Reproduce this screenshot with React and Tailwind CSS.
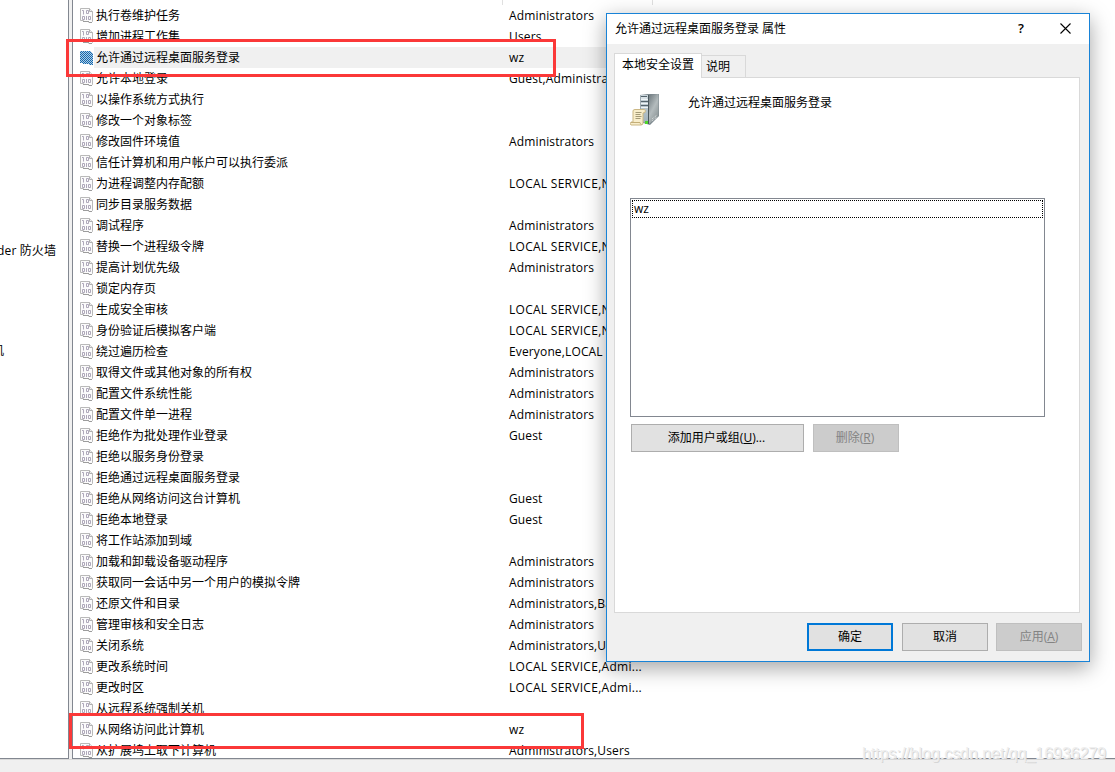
import React from 'react';

const policies = [
  { name: '执行卷维护任务', value: 'Administrators' },
  { name: '增加进程工作集', value: 'Users' },
  { name: '允许通过远程桌面服务登录', value: 'wz', selected: true },
  { name: '允许本地登录', value: 'Guest,Administrators' },
  { name: '以操作系统方式执行', value: '' },
  { name: '修改一个对象标签', value: '' },
  { name: '修改固件环境值', value: 'Administrators' },
  { name: '信任计算机和用户帐户可以执行委派', value: '' },
  { name: '为进程调整内存配额', value: 'LOCAL SERVICE,NETWO...' },
  { name: '同步目录服务数据', value: '' },
  { name: '调试程序', value: 'Administrators' },
  { name: '替换一个进程级令牌', value: 'LOCAL SERVICE,NETWO...' },
  { name: '提高计划优先级', value: 'Administrators' },
  { name: '锁定内存页', value: '' },
  { name: '生成安全审核', value: 'LOCAL SERVICE,NETWO...' },
  { name: '身份验证后模拟客户端', value: 'LOCAL SERVICE,NETWO...' },
  { name: '绕过遍历检查', value: 'Everyone,LOCAL SERVI...' },
  { name: '取得文件或其他对象的所有权', value: 'Administrators' },
  { name: '配置文件系统性能', value: 'Administrators' },
  { name: '配置文件单一进程', value: 'Administrators' },
  { name: '拒绝作为批处理作业登录', value: 'Guest' },
  { name: '拒绝以服务身份登录', value: '' },
  { name: '拒绝通过远程桌面服务登录', value: '' },
  { name: '拒绝从网络访问这台计算机', value: 'Guest' },
  { name: '拒绝本地登录', value: 'Guest' },
  { name: '将工作站添加到域', value: '' },
  { name: '加载和卸载设备驱动程序', value: 'Administrators' },
  { name: '获取同一会话中另一个用户的模拟令牌', value: 'Administrators' },
  { name: '还原文件和目录', value: 'Administrators,Backup...' },
  { name: '管理审核和安全日志', value: 'Administrators' },
  { name: '关闭系统', value: 'Administrators,Users' },
  { name: '更改系统时间', value: 'LOCAL SERVICE,Admi...' },
  { name: '更改时区', value: 'LOCAL SERVICE,Admi...' },
  { name: '从远程系统强制关机', value: '' },
  { name: '从网络访问此计算机', value: 'wz' },
  { name: '从扩展坞上取下计算机', value: 'Administrators,Users' },
];

const PolicyIcon = ({ selected }) => (
  <svg width="14" height="15" viewBox="0 0 14 15" className="shrink-0">
    <defs>
      <pattern id="dither" width="2" height="2" patternUnits="userSpaceOnUse">
        <rect width="2" height="2" fill="#b4cde2" />
        <rect width="1" height="1" fill="#1269b0" />
        <rect x="1" y="1" width="1" height="1" fill="#1269b0" />
      </pattern>
    </defs>
    {selected ? (
      <path d="M0 1h10l3 3v11h-3l-2-1H4l-2-1H0z" fill="url(#dither)" shapeRendering="crispEdges" />
    ) : (
      <>
        <path d="M.5 .5h9l3 3v10l-1 1h-2l-2-1h-3l-1-1h-3z" fill="#fbfbfb" stroke="#b9b9b9" />
        <path d="M9.500 .5v3h3" fill="#ececec" stroke="#b0b0b0" />
        <path d="M3 13.500h6M9 14.500h3" stroke="#9c9c9c" fill="none" />
        <path d="M2 2.500h1.500v4M6.500 2.500h2v3h-2zM2.500 8.500h2v3h-2zM6.500 8v4M8.500 8.500h2v3h-2z" stroke="#a69fb2" strokeWidth=".9" fill="none" />
      </>
    )}
  </svg>
);

const ServerIcon = () => (
  <svg width="32" height="34" viewBox="0 0 32 34">
    <defs>
      <linearGradient id="side" x1="0" y1="0" x2=".6" y2="1">
        <stop offset="0" stopColor="#6d787d" />
        <stop offset=".55" stopColor="#b3bbbd" />
        <stop offset="1" stopColor="#8c9597" />
      </linearGradient>
      <linearGradient id="front" x1="0" y1="0" x2="0" y2="1">
        <stop offset="0" stopColor="#c9d4da" />
        <stop offset="1" stopColor="#9fb0ba" />
      </linearGradient>
    </defs>
    <path d="M10 2l8-1h11v22l-9 9-10-3z" fill="#7c888e" />
    <path d="M10.500 2h8v29l-8-3z" fill="url(#front)" />
    <path d="M19 2l9.500-1v22l-9.500 8z" fill="url(#side)" />
    <path d="M11 3.500h6M11 8.500h7M11 12.500h7" stroke="#54636c" />
    <path d="M11 5h6M11 6.500h7M11 10.500h7M11 14.500h7" stroke="#eef4f7" />
    <path d="M18.500 2v29" stroke="#4a575d" />
    <path d="M22 26l5-4M22 28l5-4" stroke="#dfe3e4" strokeDasharray="1 1" />
    <rect x="15" y="28" width="3" height="3" fill="#4fd62a" />
    <path d="M3 18q0-1.500 2-1.500h9.500q1.500 1 .5 3l-2 .5v10q0 2-2 2H1q-1.500-1 0-3h2z" fill="#f8edca" stroke="#cbb784" />
    <path d="M1 29.500h9q0 1.500 1.500 2" fill="none" stroke="#c4ae78" />
    <path d="M5.500 19.500h6M5.500 21.500h5M5.500 23.500h6M5.500 25.500h5" stroke="#a39976" />
  </svg>
);

const DialogButton = ({ children, className }) => (
  <button className={`h-7 border flex items-center justify-center ${className}`}>{children}</button>
);

const normalBtn = 'bg-[#e1e1e1] border-[#adadad]';
const disabledBtn = 'bg-[#cccccc] border-[#bfbfbf] text-[#838383]';

const PropertiesDialog = () => (
  <div className="absolute left-[606px] top-[13px] w-[484px] h-[649px] bg-[#f0f0f0] border border-[#1883d7] shadow-[0_6px_20px_0px_rgba(0,0,0,0.36)] flex flex-col">
    <div className="h-[30px] shrink-0 bg-white flex items-center pl-2">
      <span className="grow">允许通过远程桌面服务登录 属性</span>
      <span className="w-[14px] text-center text-[13px] font-semibold mr-[32px] mb-[2px]">?</span>
      <svg width="11" height="11" viewBox="0 0 11 11" className="mr-[18px] mb-[2px]">
        <path d="M.5 .5l10 10M10.500 .5l-10 10" stroke="#000" strokeWidth="1.1" />
      </svg>
    </div>

    <div className="flex items-end pl-[7px] pt-[9px] h-[33px] shrink-0">
      <div className="w-[88px] h-[25px] -mb-px bg-white border border-b-0 border-[#d9d9d9] flex justify-center pt-[2px] relative z-10">本地安全设置</div>
      <div className="w-11 h-[22px] border border-l-0 border-b-0 border-[#d9d9d9] pl-1 pt-[2px]">说明</div>
    </div>

    <div className="ml-[7px] w-[466px] h-[536px] shrink-0 bg-white border border-[#d9d9d9] pl-[15px] flex flex-col">
      <div className="h-[120px] pt-[15px] flex items-start">
        <ServerIcon />
        <span className="ml-[26px] mt-px">允许通过远程桌面服务登录</span>
      </div>
      <div className="w-[415px] h-[219px] border border-[#828790] p-px">
        <div className="h-[18px] border border-dotted border-black pl-px flex items-center">wz</div>
      </div>
      <div className="flex gap-[9px] pl-px pt-[7px]">
        <DialogButton className={`w-[173px] pr-[2px] ${normalBtn}`}>添加用户或组(<u>U</u>)...</DialogButton>
        <DialogButton className={`w-[86px] pr-[2px] ${disabledBtn}`}>删除(<u>R</u>)</DialogButton>
      </div>
    </div>

    <div className="flex justify-end pt-[10px] pr-[7px]">
      <DialogButton className="w-[86px] mr-[9px] bg-[#e1e1e1] border-2 border-[#0078d7]">确定</DialogButton>
      <DialogButton className={`w-[86px] mr-2 ${normalBtn}`}>取消</DialogButton>
      <DialogButton className={`w-[86px] ${disabledBtn}`}>应用(<u>A</u>)</DialogButton>
    </div>
  </div>
);

export default function App() {
  return (
    <div className="relative w-[1115px] h-[772px] overflow-hidden bg-[#f0f0f0] text-black text-[12px] leading-[18px] whitespace-nowrap font-['Open_Sans','Noto_Sans_CJK_SC',sans-serif]">
      <div className="flex h-[759px]">
        {/* Console tree */}
        <div className="w-[69px] shrink-0 bg-white border-r border-b border-[#828790] flex flex-col overflow-hidden">
          <div className="mt-[242px] -ml-[3px] tracking-[0.15px]">der 防火墙</div>
          <div className="mt-[82px] -ml-[8px]">机</div>
        </div>

        {/* Policy list */}
        <div className="ml-[3px] grow bg-white border-l border-b border-[#828790] overflow-hidden">
          <div className="h-[5px] flex">
            <div className="w-[430px] border-r border-[#e0e0e0]"></div>
            <div className="w-[150px] border-r border-[#e0e0e0]"></div>
          </div>
          {policies.map((p) => (
            <div key={p.name} className="h-[21px] flex items-center pl-[7px]">
              <PolicyIcon selected={p.selected} />
              <div className={`h-full w-[559px] flex items-center pl-[2px] ${p.selected ? 'bg-[#f0f0f0]' : ''}`}>
                <span className="w-[413px] shrink-0">{p.name}</span>
                <span className={p.value.startsWith('LOCAL') ? 'tracking-[0.28px]' : 'tracking-[0.14px]'}>{p.value}</span>
              </div>
            </div>
          ))}
        </div>
      </div>
      <div className="h-px bg-[#d9d9d9]"></div>

      <PropertiesDialog />

      {/* Highlight marks */}
      <div className="absolute left-[66px] top-[39px] w-[490px] h-[38px] border-3 border-[#fb3838]"></div>
      <div className="absolute left-[69px] top-[713px] w-[515px] h-[36px] border-3 border-[#fb3838]"></div>

      <div className="absolute left-[862px] top-[744px] text-[16px] leading-[20px] tracking-[-0.04px] text-[#efefef] [text-shadow:1px_1px_0px_#d6d6d6] font-['Liberation_Sans',sans-serif]">https://blog.csdn.net/qq_16936279</div>
    </div>
  );
}
